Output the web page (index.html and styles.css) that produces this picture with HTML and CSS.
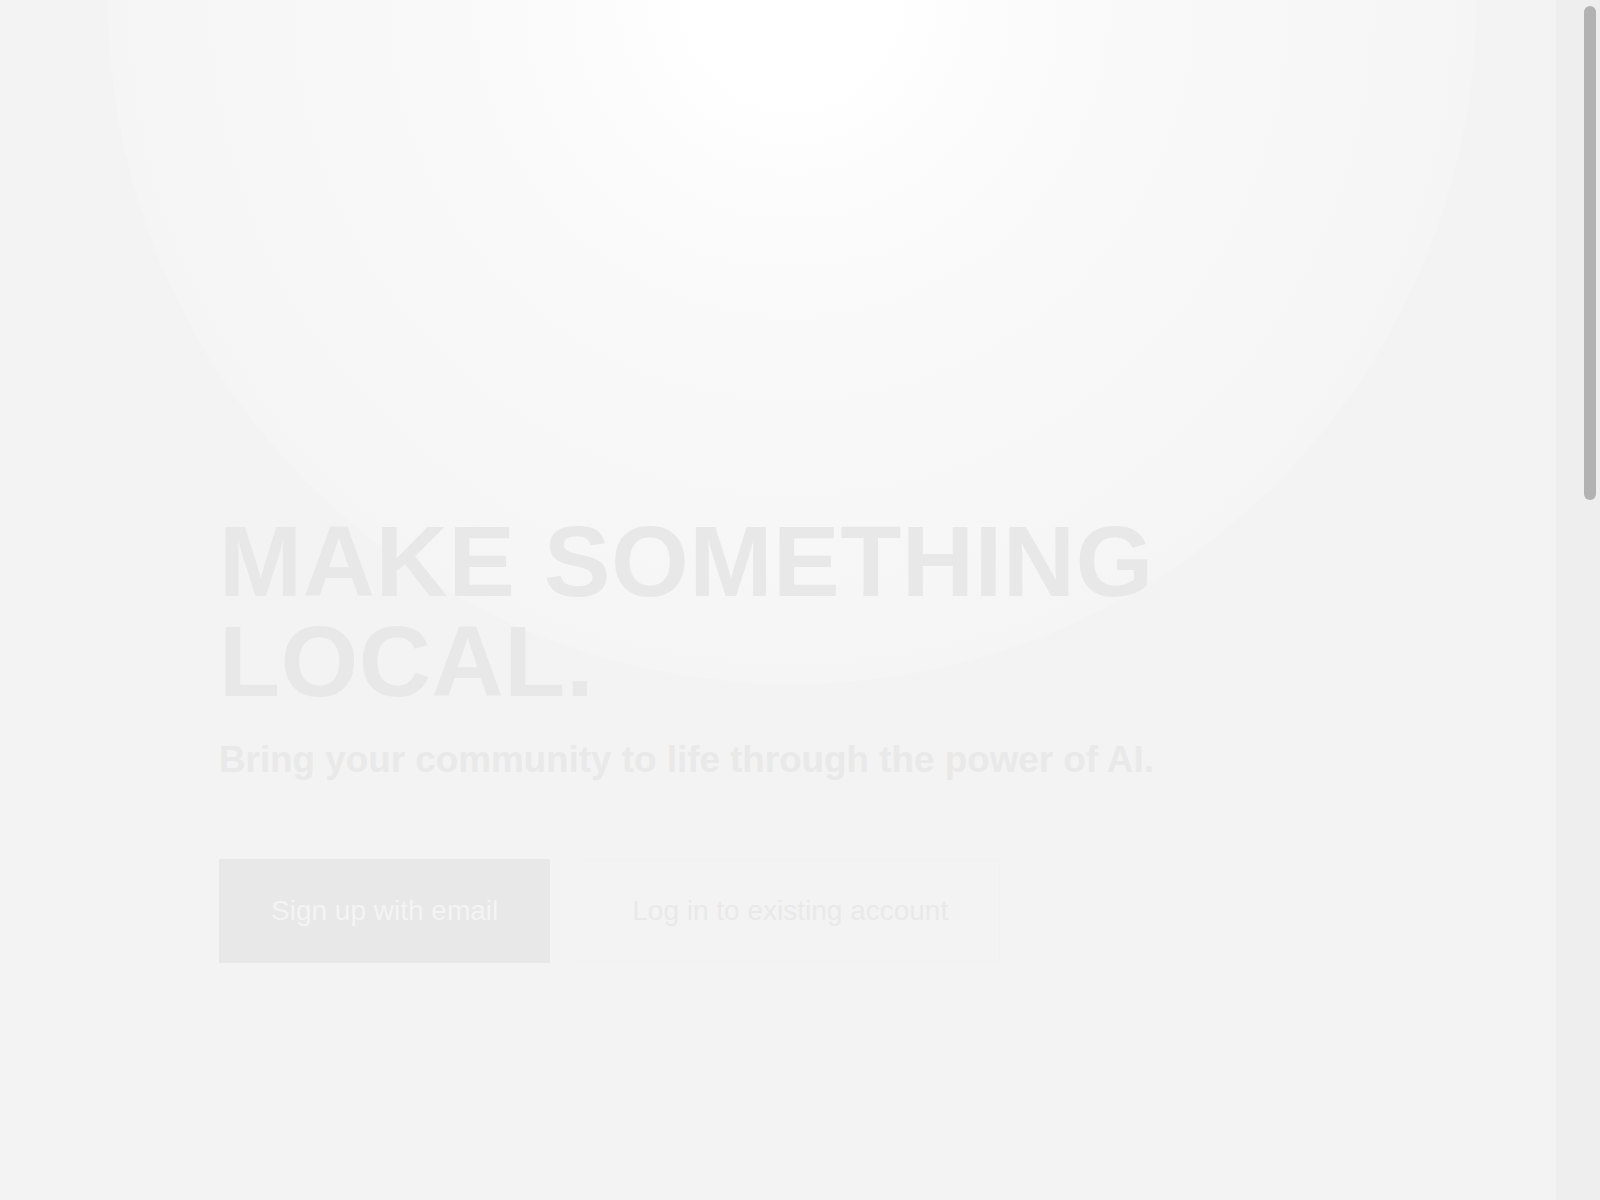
FILE: index.html
```html
<!DOCTYPE html>
<html lang="en">
<head>
<meta charset="utf-8">
<title>Make something local</title>
<link rel="stylesheet" href="styles.css">
</head>
<body class="page">
  <main class="main">
    <section class="hero">
      <h1 class="hero-title">MAKE SOMETHING LOCAL.</h1>
      <p class="hero-sub">Bring your community to life through the power of AI.</p>
      <div class="actions">
        <a class="btn btn-primary" href="#">Sign up with email</a>
        <a class="btn btn-ghost" href="#">Log in to existing account</a>
      </div>
    </section>
  </main>
  <aside class="rail" aria-hidden="true">
    <div class="thumb"></div>
  </aside>
</body>
</html>
```

FILE: styles.css
```css
html, body {
  margin: 0;
  padding: 0;
  height: 1200px;
  overflow: hidden;
}

.page {
  display: flex;
  background: #f3f3f3;
  font-family: "Liberation Sans", Arial, sans-serif;
}

.main {
  flex: 1;
  height: 1200px;
  background: radial-gradient(circle 684px at 792px 0, #ffffff 0, #ffffff 90px, #fcfcfc 180px, #f9f9f9 330px, #f7f7f7 520px, #f5f5f5 683px, #f3f3f3 685px);
}

.hero {
  padding: 511px 0 0 219px;
  max-width: 1000px;
}

.hero-title {
  margin: 0;
  font-size: 100px;
  line-height: 100px;
  font-weight: 700;
  letter-spacing: 0.5px;
  color: #e8e8e8;
}

.hero-sub {
  margin: 29px 0 0;
  font-size: 36.8px;
  line-height: 40px;
  font-weight: 700;
  color: #e9e9e9;
  white-space: nowrap;
}

.actions {
  display: flex;
  align-items: center;
  gap: 30px;
  margin-top: 79px;
}

.btn {
  display: block;
  font-size: 28px;
  line-height: 32px;
  text-decoration: none;
  white-space: nowrap;
}

.btn-primary {
  padding: 36px 52px;
  background: #e8e8e8;
  color: #f4f4f4;
}

.btn-ghost {
  padding: 34px 51px;
  border: 1px solid #f1f1f1;
  color: #e9e9e9;
}

.rail {
  width: 44px;
  flex: none;
  height: 1200px;
  background: #eeeeee;
  box-sizing: border-box;
  padding: 6px 4px 0 28px;
}

.thumb {
  width: 12px;
  height: 494px;
  border-radius: 6px;
  background: #b2b2b2;
}
```
